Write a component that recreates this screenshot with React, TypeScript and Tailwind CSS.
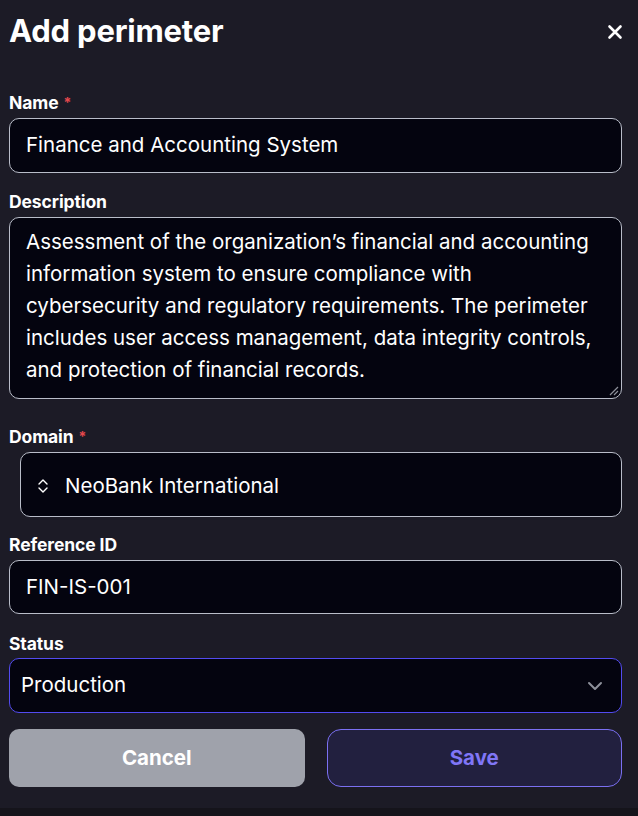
import React from "react";

const font = { fontFamily: "Inter, 'Noto Sans', sans-serif" };

function Label({ text, required }: { text: string; required?: boolean }) {
  return (
    <div className="text-[17.5px] font-bold text-white leading-[20px] tracking-[-0.1px]">
      {text}
      {required && <span className="ml-[5px] text-[#e5484d] align-top text-[14px]">*</span>}
    </div>
  );
}

export default function App() {
  return (
    <div className="w-[638px] h-[816px] bg-[#15141b] font-['Inter',sans-serif]" style={font}>
      <div className="h-[808px] bg-[#1c1b26] pl-[9px] pr-[16px]">
        <div className="flex items-center justify-between pt-[12px] h-[50px]">
          <h1 className="text-[31px] font-bold text-white leading-[36px] tracking-[-0.2px]">Add perimeter</h1>
          <svg width="16" height="16" viewBox="0 0 16 16" className="mr-[-1px] mt-[2px]">
            <path d="M2.5 2.5 L13.5 13.5 M13.5 2.5 L2.5 13.5" stroke="white" strokeWidth="2.6" strokeLinecap="round" />
          </svg>
        </div>

        <div className="mt-[43px]">
          <Label text="Name" required />
          <div className="mt-[5px] h-[55px] rounded-[10px] border border-[#b9bdc9] bg-[#04040f] flex items-center px-[16px] text-[20.5px] text-white">
            Finance and Accounting System
          </div>
        </div>

        <div className="mt-[19px]">
          <Label text="Description" />
          <div className="relative mt-[5px] h-[182px] rounded-[10px] border border-[#b9bdc9] bg-[#04040f] pl-[16px] pr-[14px] pt-[8px] text-[20.5px] leading-[32px] text-white">
            Assessment of the organization’s financial and accounting information system to ensure compliance with cybersecurity and regulatory requirements. The perimeter includes user access management, data integrity controls, and protection of financial records.
            <svg width="10" height="10" viewBox="0 0 10 10" className="absolute right-[2px] bottom-[2px]">
              <path d="M9 1 L1 9 M9 5 L5 9" stroke="#8d909a" strokeWidth="1.2" />
            </svg>
          </div>
        </div>

        <div className="mt-[28px]">
          <Label text="Domain" required />
          <div className="ml-[11px] mt-[5px] h-[65px] rounded-[10px] border border-[#b9bdc9] bg-[#04040f] flex items-center pl-[16px] pt-[3px] text-[20.5px] text-white">
            <svg width="12" height="16" viewBox="0 0 12 16" className="mr-[16px]">
              <path d="M2 6 L6 2 L10 6 M2 10 L6 14 L10 10" stroke="white" strokeWidth="1.4" fill="none" strokeLinejoin="round" strokeLinecap="round" />
            </svg>
            NeoBank International
          </div>
        </div>

        <div className="mt-[18px]">
          <Label text="Reference ID" />
          <div className="mt-[5px] h-[54px] rounded-[10px] border border-[#b9bdc9] bg-[#04040f] flex items-center px-[16px] text-[20.5px] text-white">
            FIN-IS-001
          </div>
        </div>

        <div className="mt-[20px]">
          <Label text="Status" />
          <div className="mt-[4px] h-[55px] rounded-[10px] border border-[#534bf0] bg-[#04040f] flex items-center justify-between pl-[11px] pr-[18px] text-[20.5px] text-white">
            <span>Production</span>
            <svg width="16" height="10" viewBox="0 0 16 10">
              <path d="M2 2 L8 8 L14 2" stroke="#8d909a" strokeWidth="2" fill="none" strokeLinecap="round" strokeLinejoin="round" />
            </svg>
          </div>
        </div>

        <div className="mt-[16px] grid grid-cols-2 gap-[22px]">
          <button className="h-[58px] rounded-[10px] bg-[#9fa2ab] text-white text-[20.5px] font-bold">Cancel</button>
          <button className="h-[58px] rounded-[14px] border border-[#7b70f2] bg-[#22203f] text-[#8076f6] text-[20.5px] font-bold">Save</button>
        </div>
      </div>
    </div>
  );
}
